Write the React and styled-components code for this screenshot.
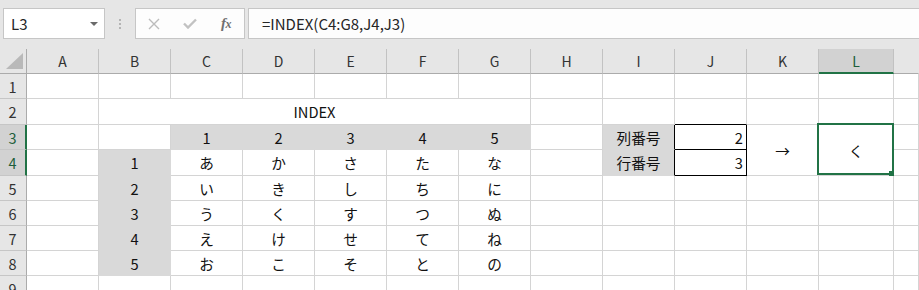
import React from 'react'
import styled, { createGlobalStyle } from 'styled-components'

const GlobalStyle = createGlobalStyle`
  html, body {
    margin: 0;
    padding: 0;
    background: #ffffff;
  }
  body {
    font-family: "Noto Sans CJK JP", "Noto Sans", sans-serif;
  }
`

const GRID = '#d4d4d4'
const FILL = '#d9d9d9'
const HEAD = '#e6e6e6'
const HEAD_ACTIVE = '#d2d2d2'
const GREEN = '#217346'

const Window = styled.div`
    width: 919px;
    height: 290px;
    overflow: hidden;
    display: flex;
    flex-direction: column;
    background: ${HEAD};
`

const FormulaBar = styled.div`
    flex-shrink: 0;
    height: 49px;
    box-sizing: border-box;
    padding: 8px 0 0 3px;
    display: flex;
    align-items: flex-start;
`

const NameBox = styled.div`
    width: 102px;
    height: 31px;
    box-sizing: border-box;
    border: 1px solid #c6c6c6;
    background: #ffffff;
    display: flex;
    align-items: center;
    justify-content: space-between;
    padding: 0 6px 0 7px;
    font-size: 15px;
    color: #262626;
`

const DropArrow = styled.span`
    width: 0;
    height: 0;
    border-left: 4px solid transparent;
    border-right: 4px solid transparent;
    border-top: 4px solid #6a6a6a;
    margin-top: 1px;
`

const Grip = styled.div`
    width: 30px;
    height: 31px;
    display: flex;
    flex-direction: column;
    align-items: center;
    justify-content: center;
    gap: 2px;
    span {
        width: 2px;
        height: 2px;
        background: #b4b4b4;
    }
`

const FxBox = styled.div`
    width: 110px;
    height: 31px;
    box-sizing: border-box;
    border: 1px solid #c6c6c6;
    background: #fdfdfd;
    display: flex;
`

const FxSlot = styled.div`
    width: 36px;
    display: flex;
    align-items: center;
    justify-content: center;
`

const FxLabel = styled.span`
    font-family: "Liberation Serif", serif;
    font-style: italic;
    font-weight: bold;
    font-size: 15px;
    color: #707070;
    letter-spacing: -0.5px;
    small {
        font-size: 12px;
    }
`

const FormulaInput = styled.div`
    flex: 1;
    height: 31px;
    margin: 0 -2px 0 3px;
    box-sizing: border-box;
    border: 1px solid #c6c6c6;
    background: #fdfdfd;
    display: flex;
    align-items: center;
    padding-left: 13px;
    font-size: 15px;
    color: #262626;
`

const Sheet = styled.div`
    flex: 1;
    min-height: 0;
    overflow: hidden;
    display: grid;
    grid-template-columns: 27px repeat(11, 72px) 75px 1fr;
    grid-template-rows: 25px 25px 26px 25px 26px 25px 25px 25px 25px 25px;
    background: #ffffff;
`

const Corner = styled.div`
    position: relative;
    background: ${HEAD};
    border-right: 1px solid #ababab;
    border-bottom: 1px solid #ababab;
    &::after {
        content: '';
        position: absolute;
        left: 6px;
        top: 4px;
        width: 17px;
        height: 16px;
        background: #b9b9b9;
        clip-path: polygon(100% 0, 100% 100%, 0 100%);
    }
`

const ColHead = styled.div`
    background: ${p => (p.$active ? HEAD_ACTIVE : HEAD)};
    border-right: 1px solid ${p => (p.$last ? 'transparent' : '#c2c2c2')};
    border-bottom: ${p => (p.$active ? `2px solid ${GREEN}` : '1px solid #ababab')};
    display: flex;
    align-items: center;
    justify-content: center;
    font-size: 14px;
    color: ${p => (p.$active ? '#1d5e3a' : '#333333')};
`

const RowHead = styled.div`
    background: ${p => (p.$active ? HEAD_ACTIVE : HEAD)};
    border-right: ${p => (p.$active ? `2px solid ${GREEN}` : '1px solid #ababab')};
    border-bottom: 1px solid #c6c6c6;
    display: flex;
    align-items: center;
    justify-content: center;
    padding-right: ${p => (p.$active ? '0' : '1px')};
    font-size: 14.5px;
    color: ${p => (p.$active ? '#1d5e3a' : '#333333')};
`

const Cell = styled.div`
    position: relative;
    grid-column: span ${p => p.$span || 1};
    grid-row: span ${p => p.$rows || 1};
    background: ${p => (p.$fill ? FILL : '#ffffff')};
    border-right: 1px solid ${p => p.$rb || (p.$fill ? FILL : GRID)};
    border-bottom: 1px solid ${p => p.$bb || (p.$fill ? FILL : GRID)};
    display: flex;
    align-items: center;
    justify-content: ${p => (p.$align === 'right' ? 'flex-end' : 'center')};
    padding: 0 3px;
    font-size: 14.67px;
    color: #111111;
    white-space: nowrap;
`

const Selection = styled.div`
    position: absolute;
    top: -2px;
    left: -2px;
    right: -1px;
    bottom: 0;
    border: 2px solid ${GREEN};
    pointer-events: none;
`

const Handle = styled.div`
    position: absolute;
    right: -2px;
    bottom: -2px;
    width: 6px;
    height: 6px;
    background: ${GREEN};
`

const COLS = ['A', 'B', 'C', 'D', 'E', 'F', 'G', 'H', 'I', 'J', 'K', 'L']
const KANA = [
    ['あ', 'か', 'さ', 'た', 'な'],
    ['い', 'き', 'し', 'ち', 'に'],
    ['う', 'く', 'す', 'つ', 'ぬ'],
    ['え', 'け', 'せ', 'て', 'ね'],
    ['お', 'こ', 'そ', 'と', 'の'],
]

const blank = n => Array.from({ length: n }, () => ({}))

// one entry per rendered cell, merged cells carry span / rows
const rows = [
    blank(13),
    [
        {},
        { text: 'INDEX', span: 6 },
        {}, {}, { bb: '#000' }, {}, {}, {},
    ],
    [
        {}, {},
        ...[1, 2, 3, 4, 5].map(n => ({ text: n, fill: true })),
        {},
        { text: '列番号', fill: true, rb: '#000' },
        { text: 2, align: 'right', rb: '#000', bb: '#000' },
        { text: '→', rows: 2 },
        { text: 'く', rows: 2, selected: true },
        {},
    ],
    [
        {},
        { text: 1, fill: true },
        ...KANA[0].map(k => ({ text: k })),
        {},
        { text: '行番号', fill: true, rb: '#000' },
        { text: 3, align: 'right', rb: '#000', bb: '#000' },
        {},
    ],
    ...KANA.slice(1).map((line, i) => [
        {},
        { text: i + 2, fill: true },
        ...line.map(k => ({ text: k })),
        ...blank(6),
    ]),
    blank(13),
]

const XIcon = () => (
    <svg width="12" height="12" viewBox="0 0 12 12">
        <path d="M1 1 L11 11 M11 1 L1 11" stroke="#bcbcbc" strokeWidth="1.4" fill="none" />
    </svg>
)

const CheckIcon = () => (
    <svg width="14" height="11" viewBox="0 0 14 11">
        <path d="M1 5.5 L5 9.5 L13 1.5" stroke="#c2c2c2" strokeWidth="2.4" fill="none" />
    </svg>
)

const App = () => {
    return (
        <Window>
            <GlobalStyle />
            <FormulaBar>
                <NameBox>
                    L3
                    <DropArrow />
                </NameBox>
                <Grip>
                    <span />
                    <span />
                    <span />
                </Grip>
                <FxBox>
                    <FxSlot><XIcon /></FxSlot>
                    <FxSlot><CheckIcon /></FxSlot>
                    <FxSlot><FxLabel>f<small>x</small></FxLabel></FxSlot>
                </FxBox>
                <FormulaInput>=INDEX(C4:G8,J4,J3)</FormulaInput>
            </FormulaBar>
            <Sheet>
                <Corner />
                {COLS.map(c => (
                    <ColHead key={c} $active={c === 'L'}>{c}</ColHead>
                ))}
                <ColHead $last />
                {rows.map((cells, r) => (
                    <React.Fragment key={r}>
                        <RowHead $active={r === 2 || r === 3}>{r + 1}</RowHead>
                        {cells.map((cell, i) => (
                            <Cell
                                key={i}
                                $span={cell.span}
                                $rows={cell.rows}
                                $fill={cell.fill}
                                $align={cell.align}
                                $rb={cell.rb}
                                $bb={cell.bb}
                            >
                                {cell.text}
                                {cell.selected && (
                                    <>
                                        <Selection />
                                        <Handle />
                                    </>
                                )}
                            </Cell>
                        ))}
                    </React.Fragment>
                ))}
            </Sheet>
        </Window>
    )
}

export default App
